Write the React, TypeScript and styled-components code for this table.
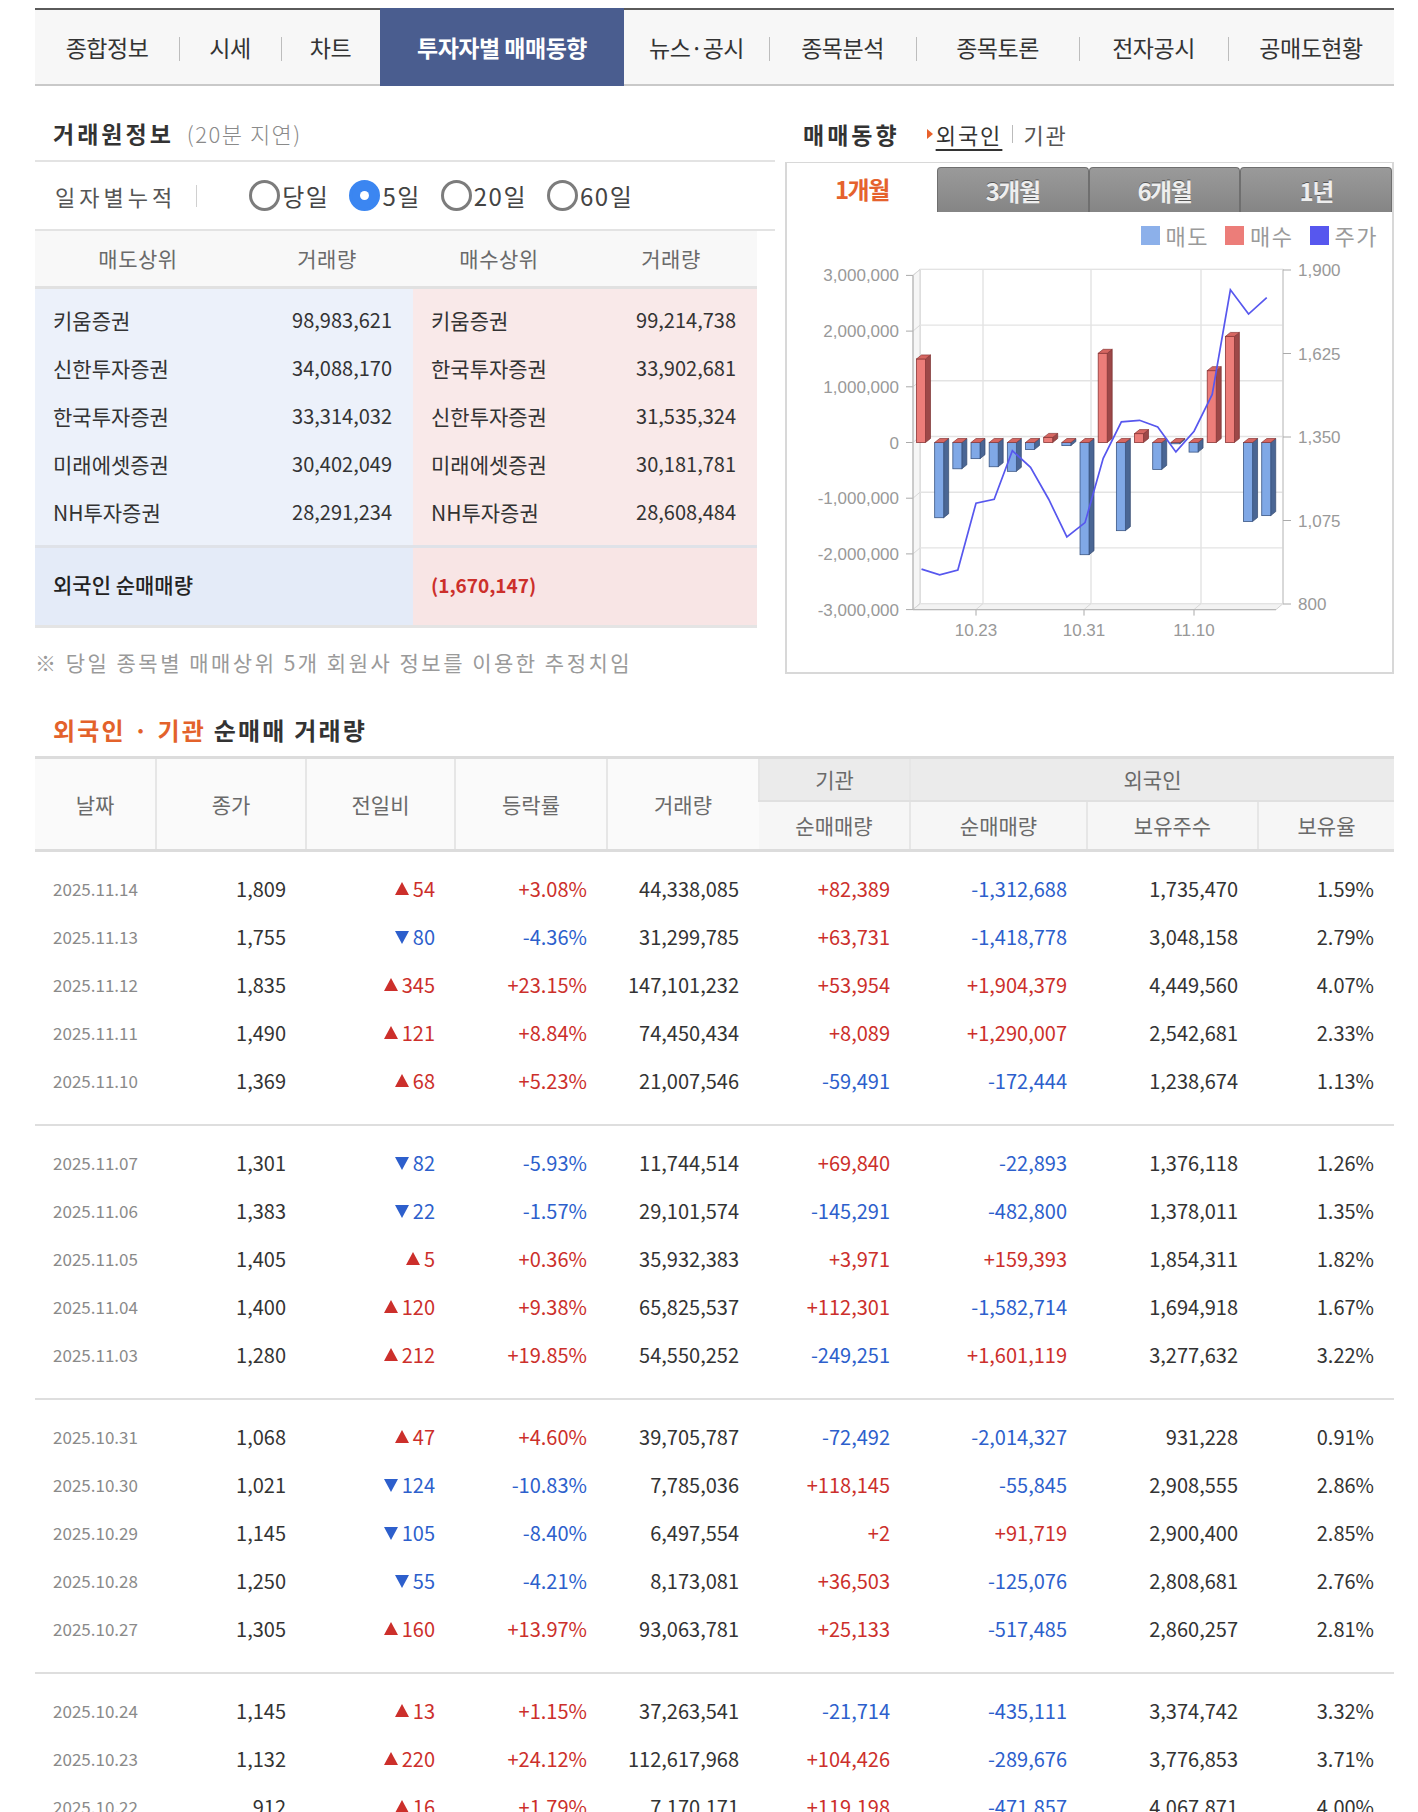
import React from 'react'
import styled, { createGlobalStyle, css } from 'styled-components'

const GlobalStyle = createGlobalStyle`
	* { box-sizing: border-box; }
	body {
		margin: 0;
		background: #fff;
		color: #333;
		font-family: 'Noto Sans CJK KR', 'Noto Sans', sans-serif;
	}
`

const RED = '#cc2f2b'
const BLUE = '#2d5fcc'

const navTabs = [
	{ label: '종합정보', w: 144 },
	{ label: '시세', w: 102 },
	{ label: '차트', w: 99 },
	{ label: '투자자별 매매동향', w: 244, active: true },
	{ label: '뉴스·공시', w: 145 },
	{ label: '종목분석', w: 147 },
	{ label: '종목토론', w: 163 },
	{ label: '전자공시', w: 149 },
	{ label: '공매도현황', w: 166 },
]

const brokers = [
	['키움증권', '98,983,621', '키움증권', '99,214,738'],
	['신한투자증권', '34,088,170', '한국투자증권', '33,902,681'],
	['한국투자증권', '33,314,032', '신한투자증권', '31,535,324'],
	['미래에셋증권', '30,402,049', '미래에셋증권', '30,181,781'],
	['NH투자증권', '28,291,234', 'NH투자증권', '28,608,484'],
]

type Row = [string, string, number, string, string, string, string, string, string]

// date, close, change (signed), rate, volume, inst, foreign, holding, ratio
const rows: Row[] = [
	['2025.11.14', '1,809', 54, '+3.08%', '44,338,085', '+82,389', '-1,312,688', '1,735,470', '1.59%'],
	['2025.11.13', '1,755', -80, '-4.36%', '31,299,785', '+63,731', '-1,418,778', '3,048,158', '2.79%'],
	['2025.11.12', '1,835', 345, '+23.15%', '147,101,232', '+53,954', '+1,904,379', '4,449,560', '4.07%'],
	['2025.11.11', '1,490', 121, '+8.84%', '74,450,434', '+8,089', '+1,290,007', '2,542,681', '2.33%'],
	['2025.11.10', '1,369', 68, '+5.23%', '21,007,546', '-59,491', '-172,444', '1,238,674', '1.13%'],
	['2025.11.07', '1,301', -82, '-5.93%', '11,744,514', '+69,840', '-22,893', '1,376,118', '1.26%'],
	['2025.11.06', '1,383', -22, '-1.57%', '29,101,574', '-145,291', '-482,800', '1,378,011', '1.35%'],
	['2025.11.05', '1,405', 5, '+0.36%', '35,932,383', '+3,971', '+159,393', '1,854,311', '1.82%'],
	['2025.11.04', '1,400', 120, '+9.38%', '65,825,537', '+112,301', '-1,582,714', '1,694,918', '1.67%'],
	['2025.11.03', '1,280', 212, '+19.85%', '54,550,252', '-249,251', '+1,601,119', '3,277,632', '3.22%'],
	['2025.10.31', '1,068', 47, '+4.60%', '39,705,787', '-72,492', '-2,014,327', '931,228', '0.91%'],
	['2025.10.30', '1,021', -124, '-10.83%', '7,785,036', '+118,145', '-55,845', '2,908,555', '2.86%'],
	['2025.10.29', '1,145', -105, '-8.40%', '6,497,554', '+2', '+91,719', '2,900,400', '2.85%'],
	['2025.10.28', '1,250', -55, '-4.21%', '8,173,081', '+36,503', '-125,076', '2,808,681', '2.76%'],
	['2025.10.27', '1,305', 160, '+13.97%', '93,063,781', '+25,133', '-517,485', '2,860,257', '2.81%'],
	['2025.10.24', '1,145', 13, '+1.15%', '37,263,541', '-21,714', '-435,111', '3,374,742', '3.32%'],
	['2025.10.23', '1,132', 220, '+24.12%', '112,617,968', '+104,426', '-289,676', '3,776,853', '3.71%'],
	['2025.10.22', '912', 16, '+1.79%', '7,170,171', '+119,198', '-471,857', '4,067,871', '4.00%'],
	['2025.10.21', '896', -19, '-2.08%', '9,412,305', '-38,120', '-1,350,214', '4,539,728', '4.47%'],
	['2025.10.20', '915', 12, '+1.33%', '8,806,442', '+15,907', '+1,498,330', '5,889,942', '5.80%'],
]

const colWidths = [121, 150, 149, 152, 152, 151, 177, 171, 136]

// chart data (chronological)
const prices = [915, 896, 912, 1132, 1145, 1305, 1250, 1145, 1021, 1068, 1280, 1400, 1405, 1383, 1301, 1369, 1490, 1835, 1755, 1809]
const nets = [
	1500000, -1350214, -471857, -289676, -435111, -517485, -125076, 91719, -55845, -2014327, 1601119, -1582714, 159393,
	-482800, -22893, -172444, 1290007, 1904379, -1418778, -1312688,
]

const tone = (s: string) => (s.startsWith('+') ? RED : s.startsWith('-') ? BLUE : '#333')

const yv = (v: number) => 184.5 - (v / 1e6) * 55.7
const yp = (p: number) => 346 - ((p - 800) / 1100) * 334
const bx = (i: number) => 134.5 + i * 18.17
const WX = 7
const WY = 6

const TradeChart = () => {
	const levels = [3, 2, 1, 0, -1, -2, -3].map(m => m * 1e6)
	const priceTicks = [1900, 1625, 1350, 1075, 800]
	const xLabels = [
		{ t: '10.23', x: 189 },
		{ t: '10.31', x: 297 },
		{ t: '11.10', x: 407 },
	]
	const top = yv(3e6)
	const bottom = yv(-3e6)
	const y0 = yv(0)
	const linePts = prices.map((p, i) => `${bx(i)},${yp(p)}`).join(' ')

	return (
		<ChartSvg width={605} height={414} viewBox="0 0 605 414">
			{/* walls */}
			<rect x={126 + WX} y={top - WY} width={496 - 126 - WX} height={bottom - top} fill="#fff" stroke="#d4d4d4" />
			<polygon
				points={`126,${top} ${126 + WX},${top - WY} ${126 + WX},${bottom - WY} 126,${bottom}`}
				fill="#f6f6f6"
				stroke="#d4d4d4"
			/>
			<polygon
				points={`126,${bottom} ${126 + WX},${bottom - WY} 496,${bottom - WY} ${496 - WX},${bottom}`}
				fill="#f3f3f3"
				stroke="#d4d4d4"
			/>
			{levels.map(v => (
				<g key={v}>
					<line x1={126 + WX} x2={496} y1={yv(v) - WY} y2={yv(v) - WY} stroke="#e3e3e3" strokeWidth={1.4} />
					<line x1={126} x2={126 + WX} y1={yv(v)} y2={yv(v) - WY} stroke="#d8d8d8" />
					<line x1={119} x2={126} y1={yv(v)} y2={yv(v)} stroke="#aaa" />
					<AxisText x={112} y={yv(v) + 6} textAnchor="end">
						{v.toLocaleString('en-US')}
					</AxisText>
				</g>
			))}
			{xLabels.map(l => (
				<g key={l.t}>
					<line x1={l.x + WX} x2={l.x + WX} y1={top - WY} y2={bottom - WY} stroke="#e3e3e3" strokeWidth={1.4} />
					<line x1={l.x} x2={l.x + WX} y1={bottom} y2={bottom - WY} stroke="#d8d8d8" />
					<line x1={l.x} x2={l.x} y1={bottom} y2={bottom + 6} stroke="#aaa" />
					<AxisText x={l.x} y={378} textAnchor="middle">
						{l.t}
					</AxisText>
				</g>
			))}
			<line x1={126} x2={126} y1={top} y2={bottom} stroke="#b8b8b8" strokeWidth={1.2} />
			<line x1={126} x2={496 - WX} y1={bottom} y2={bottom} stroke="#b8b8b8" strokeWidth={1.2} />
			<line x1={496} x2={496} y1={top - WY} y2={bottom - WY} stroke="#c8c8c8" />
			{priceTicks.map(p => (
				<g key={p}>
					<line x1={496} x2={504} y1={yp(p)} y2={yp(p)} stroke="#aaa" />
					<AxisText x={511} y={yp(p) + 6}>
						{p.toLocaleString('en-US')}
					</AxisText>
				</g>
			))}

			{/* bars */}
			{nets.map((v, i) => {
				const x = bx(i) - 5
				const w = 9
				const d = 5
				const yt = yv(v)
				const pos = v > 0
				const y1 = pos ? yt : y0
				const y2 = pos ? y0 : yt
				return (
					<g key={i}>
						<polygon
							points={`${x + w},${y1} ${x + w + d},${y1 - 4} ${x + w + d},${y2 - 4} ${x + w},${y2}`}
							fill={pos ? '#9c4848' : '#4a6694'}
							stroke={pos ? '#7a3030' : '#33496e'}
							strokeWidth={0.7}
						/>
						<rect
							x={x}
							y={y1}
							width={w}
							height={Math.max(y2 - y1, 0.5)}
							fill={pos ? '#ec7d79' : '#80a8e6'}
							stroke={pos ? '#8a3636' : '#3a5684'}
							strokeWidth={0.8}
						/>
						<polygon
							points={`${x},${y1} ${x + d},${y1 - 4} ${x + w + d},${y1 - 4} ${x + w},${y1}`}
							fill="#d66661"
							stroke="#8a3636"
							strokeWidth={0.7}
						/>
					</g>
				)
			})}

			<polyline points={linePts} fill="none" stroke="#5757ee" strokeWidth={1.7} />
		</ChartSvg>
	)
}

const App = () => {
	return (
		<Page>
			<GlobalStyle />
			<Nav>
				{navTabs.map((t, i) => {
					const prev = navTabs[i - 1]
					const sep = i > 0 && !t.active && !(prev && prev.active)
					return (
						<NavTab key={t.label} $w={t.w} $active={!!t.active} $sep={sep}>
							{t.label}
						</NavTab>
					)
				})}
			</Nav>

			<Middle>
				<LeftPanel>
					<TitleRow $line>
						<Title>거래원정보</Title>
						<TitleNote>(20분 지연)</TitleNote>
					</TitleRow>
					<FilterRow>
						<FilterLabel>일자별누적</FilterLabel>
						<Divider />
						<RadioGroup>
							{['당일', '5일', '20일', '60일'].map(l => (
								<RadioItem key={l}>
									<Radio $on={l === '5일'} />
									<span>{l}</span>
								</RadioItem>
							))}
						</RadioGroup>
					</FilterRow>
					<BrokerTable>
						<colgroup>
							<Col $w={206} />
							<Col $w={172} />
							<Col $w={172} />
							<Col $w={172} />
						</colgroup>
						<thead>
							<tr>
								<BrokerTh>매도상위</BrokerTh>
								<BrokerTh>거래량</BrokerTh>
								<BrokerTh>매수상위</BrokerTh>
								<BrokerTh>거래량</BrokerTh>
							</tr>
						</thead>
						<BrokerBody>
							{brokers.map(b => (
								<tr key={b[0] + b[2]}>
									<BrokerTd $side="sell">{b[0]}</BrokerTd>
									<BrokerTd $side="sell" $num>
										{b[1]}
									</BrokerTd>
									<BrokerTd $side="buy">{b[2]}</BrokerTd>
									<BrokerTd $side="buy" $num>
										{b[3]}
									</BrokerTd>
								</tr>
							))}
						</BrokerBody>
						<tfoot>
							<tr>
								<TotalTd $side="sell" colSpan={2}>
									외국인 순매매량
								</TotalTd>
								<TotalTd $side="buy" colSpan={2}>
									<NetValue>(1,670,147)</NetValue>
								</TotalTd>
							</tr>
						</tfoot>
					</BrokerTable>
					<Footnote>※ 당일 종목별 매매상위 5개 회원사 정보를 이용한 추정치임</Footnote>
				</LeftPanel>

				<RightPanel>
					<TitleRow>
						<Title>매매동향</Title>
						<SubLinks>
							<Pointer />
							<SubLink $current>외국인</SubLink>
							<SubSep />
							<SubLink>기관</SubLink>
						</SubLinks>
					</TitleRow>
					<ChartBox>
						<PeriodTabs>
							{['1개월', '3개월', '6개월', '1년'].map((p, i) => (
								<PeriodTab key={p} $active={i === 0}>
									{p}
								</PeriodTab>
							))}
						</PeriodTabs>
						<Legend>
							<LegendItem $color="#8cb0ea">매도</LegendItem>
							<LegendItem $color="#ec7d79">매수</LegendItem>
							<LegendItem $color="#5757ee">주가</LegendItem>
						</Legend>
						<TradeChart />
					</ChartBox>
				</RightPanel>
			</Middle>

			<SectionTitle>
				<Accent>외국인 · 기관</Accent> 순매매 거래량
			</SectionTitle>
			<DailyTable>
				<colgroup>
					{colWidths.map((w, i) => (
						<Col key={i} $w={w} />
					))}
				</colgroup>
				<thead>
					<tr>
						<HeadTh rowSpan={2}>날짜</HeadTh>
						<HeadTh rowSpan={2}>종가</HeadTh>
						<HeadTh rowSpan={2}>전일비</HeadTh>
						<HeadTh rowSpan={2}>등락률</HeadTh>
						<HeadTh rowSpan={2}>거래량</HeadTh>
						<HeadTh $tone="group">기관</HeadTh>
						<HeadTh $tone="group" colSpan={3}>
							외국인
						</HeadTh>
					</tr>
					<tr>
						<HeadTh $tone="sub">순매매량</HeadTh>
						<HeadTh $tone="sub">순매매량</HeadTh>
						<HeadTh $tone="sub">보유주수</HeadTh>
						<HeadTh $tone="sub">보유율</HeadTh>
					</tr>
				</thead>
				{[0, 1, 2, 3].map(g => (
					<DailyBody key={g}>
						{rows.slice(g * 5, g * 5 + 5).map(r => (
							<tr key={r[0]}>
								<DateTd>{r[0]}</DateTd>
								<NumTd>{r[1]}</NumTd>
								<NumTd $color={r[2] > 0 ? RED : BLUE}>
									<Arrow $up={r[2] > 0} />
									{Math.abs(r[2])}
								</NumTd>
								<NumTd $color={tone(r[3])}>{r[3]}</NumTd>
								<NumTd>{r[4]}</NumTd>
								<NumTd $color={tone(r[5])}>{r[5]}</NumTd>
								<NumTd $color={tone(r[6])}>{r[6]}</NumTd>
								<NumTd>{r[7]}</NumTd>
								<NumTd>{r[8]}</NumTd>
							</tr>
						))}
					</DailyBody>
				))}
			</DailyTable>
		</Page>
	)
}

export default App

const Page = styled.div`
	width: 1394px;
	padding: 8px 0 40px 35px;
`

const Nav = styled.nav`
	display: flex;
	height: 78px;
	background: #f7f7f7;
	border-top: 2px solid #5a5a5a;
	border-bottom: 2px solid #c9c9c9;
`

const NavTab = styled.div<{ $w: number; $active: boolean; $sep: boolean }>`
	position: relative;
	flex: 0 0 ${p => p.$w}px;
	display: flex;
	align-items: center;
	justify-content: center;
	font-size: 23px;
	letter-spacing: -0.5px;
	color: #333;

	${p =>
		p.$active &&
		css`
			margin: -2px 0 -2px;
			background: #4a5d8f;
			color: #fff;
			font-weight: 700;
		`}

	${p =>
		p.$sep &&
		css`
			&::before {
				content: '';
				position: absolute;
				left: 0;
				top: 27px;
				width: 1px;
				height: 24px;
				background: #bdbdbd;
			}
		`}
`

const Middle = styled.div`
	display: flex;
	gap: 10px;
	align-items: flex-start;
`

const LeftPanel = styled.section`
	width: 740px;
`

const RightPanel = styled.section`
	width: 609px;
`

const TitleRow = styled.div<{ $line?: boolean }>`
	display: flex;
	align-items: center;
	height: 76px;
	padding: 20px 0 0 18px;
	${p => p.$line && 'border-bottom: 2px solid #e3e3e3;'}
`

const Title = styled.h2`
	margin: 0;
	font-size: 23px;
	font-weight: 700;
	letter-spacing: 3px;
	color: #333;
`

const TitleNote = styled.span`
	margin-left: 13px;
	font-size: 22px;
	letter-spacing: 1.5px;
	color: #8a8a8a;
	font-weight: 300;
`

const FilterRow = styled.div`
	display: flex;
	align-items: center;
	height: 69px;
	padding-left: 20px;
	border-bottom: 2px solid #e3e3e3;
`

const FilterLabel = styled.span`
	font-size: 22px;
	letter-spacing: 4px;
	color: #555;
`

const Divider = styled.span`
	width: 1px;
	height: 22px;
	margin: 0 52px 0 20px;
	background: #d0d0d0;
`

const RadioGroup = styled.div`
	display: flex;
	align-items: center;
	gap: 20px;
`

const RadioItem = styled.label`
	display: flex;
	align-items: center;
	gap: 2px;
	font-size: 24px;
	letter-spacing: 1.5px;
	color: #444;
`

const Radio = styled.span<{ $on: boolean }>`
	width: 31px;
	height: 31px;
	border-radius: 50%;
	border: 3px solid #7c7c7c;
	background: #fff;
	display: flex;
	align-items: center;
	justify-content: center;

	${p =>
		p.$on &&
		css`
			border-color: #3b86f1;
			background: #3b86f1;
			&::after {
				content: '';
				width: 9px;
				height: 9px;
				border-radius: 50%;
				background: #fff;
			}
		`}
`

const Col = styled.col<{ $w: number }>`
	width: ${p => p.$w}px;
`

const BrokerTable = styled.table`
	width: 722px;
	table-layout: fixed;
	border-collapse: collapse;
`

const BrokerTh = styled.th`
	height: 56px;
	padding: 0;
	background: #f8f8f8;
	border-bottom: 3px solid #e1e1e1;
	font-size: 21px;
	letter-spacing: 0.5px;
	font-weight: 400;
	color: #6a6a6a;
`

const sideBg = {
	sell: '#ecf1fa',
	buy: '#f9e9e9',
}

const BrokerBody = styled.tbody`
	tr:first-child td {
		padding-top: 7px;
	}
	tr:last-child td {
		padding-bottom: 9px;
	}
`

const BrokerTd = styled.td<{ $side: 'sell' | 'buy'; $num?: boolean }>`
	line-height: 48px;
	padding: 0 ${p => (p.$num ? '21px' : '0')} 0 ${p => (p.$num ? '0' : '18px')};
	text-align: ${p => (p.$num ? 'right' : 'left')};
	background: ${p => sideBg[p.$side]};
	font-size: ${p => (p.$num ? '20px' : '21px')};
	color: #333;
	white-space: nowrap;
`

const TotalTd = styled.td<{ $side: 'sell' | 'buy' }>`
	height: 80px;
	padding: 0 0 4px 18px;
	background: ${p => (p.$side === 'sell' ? '#e4ebf8' : '#f8e5e5')};
	border-top: 3px solid #dfe2e8;
	border-bottom: 3px solid #e4e4e4;
	font-size: 21px;
	font-weight: 500;
	color: #222;
`

const NetValue = styled.span`
	font-size: 19px;
	color: ${RED};
	font-weight: 700;
`

const Footnote = styled.p`
	margin: 19px 0 0;
	line-height: 30px;
	font-size: 21px;
	letter-spacing: 2.5px;
	color: #9a9a9a;
`

const SubLinks = styled.div`
	display: flex;
	align-items: center;
	margin-left: 27px;
	font-size: 22px;
`

const Pointer = styled.span`
	width: 0;
	height: 0;
	margin-right: 3px;
	border-top: 5px solid transparent;
	border-bottom: 5px solid transparent;
	border-left: 6px solid #e8612c;
`

const SubLink = styled.span<{ $current?: boolean }>`
	letter-spacing: 2px;
	color: ${p => (p.$current ? '#333' : '#555')};
	text-decoration: ${p => (p.$current ? 'underline' : 'none')};
	text-underline-offset: 5px;
`

const SubSep = styled.span`
	width: 1px;
	height: 18px;
	margin: 0 10px;
	background: #bbb;
`

const ChartBox = styled.div`
	height: 512px;
	border: 2px solid #d8d8d8;
	border-top-width: 1px;
	background: #fff;
`

const PeriodTabs = styled.div`
	display: flex;
	align-items: flex-end;
	height: 49px;
`

const PeriodTab = styled.div<{ $active: boolean }>`
	flex: 1;
	display: flex;
	align-items: center;
	justify-content: center;
	font-size: 24px;
	font-weight: 700;
	letter-spacing: -1.5px;

	${p =>
		p.$active
			? css`
					height: 49px;
					padding-top: 2px;
					background: #fff;
					color: #e5622d;
			  `
			: css`
					height: 45px;
					border: 1px solid #6f6f6f;
					border-bottom: none;
					border-radius: 4px 4px 0 0;
					background: linear-gradient(#9a9a9a, #858585);
					color: #eeeeee;
					text-shadow: 0 -1px 0 #555;
			  `}
`

const Legend = styled.div`
	display: flex;
	justify-content: flex-end;
	align-items: center;
	gap: 16px;
	height: 46px;
	padding-right: 14px;
`

const LegendItem = styled.span<{ $color: string }>`
	display: flex;
	align-items: center;
	gap: 6px;
	font-size: 22px;
	letter-spacing: 1.5px;
	color: #9a9a9a;

	&::before {
		content: '';
		width: 19px;
		height: 19px;
		background: ${p => p.$color};
	}
`

const ChartSvg = styled.svg`
	display: block;
`

const AxisText = styled.text`
	font-family: 'Liberation Sans', Arial, sans-serif;
	font-size: 17px;
	fill: #999;
`

const SectionTitle = styled.h3`
	margin: 33px 0 6px;
	height: 40px;
	line-height: 40px;
	padding-left: 18px;
	font-size: 24px;
	font-weight: 700;
	letter-spacing: 2.2px;
	color: #333;
`

const Accent = styled.span`
	color: #e3622b;
`

const DailyTable = styled.table`
	width: 1359px;
	table-layout: fixed;
	border-collapse: collapse;
	border-top: 3px solid #dcdcdc;
`

const headBg = {
	plain: '#fafafa',
	group: '#ebebeb',
	sub: '#f6f6f6',
}

const HeadTh = styled.th<{ $tone?: 'plain' | 'group' | 'sub' }>`
	height: ${p => (p.$tone === 'sub' ? '49px' : '44px')};
	padding: 0;
	background: ${p => headBg[p.$tone || 'plain']};
	border-left: 2px solid #e6e6e6;
	border-bottom: ${p => (p.$tone === 'group' ? '2px solid #e0e0e0' : '3px solid #dcdcdc')};
	font-size: 21px;
	font-weight: 400;
	color: #6a6a6a;

	&:first-child {
		border-left: none;
	}
`

const DailyBody = styled.tbody`
	border-bottom: 2px solid #dedede;

	tr:first-child td {
		padding-top: 13px;
	}
	tr:last-child td {
		padding-bottom: 19px;
	}
`

const DateTd = styled.td`
	line-height: 48px;
	padding: 0;
	text-align: center;
	font-size: 17px;
	color: #8a8a8a;
`

const NumTd = styled.td<{ $color?: string }>`
	line-height: 48px;
	padding: 0 20px 0 0;
	text-align: right;
	font-size: 20px;
	color: ${p => p.$color || '#333'};
	white-space: nowrap;
`

const Arrow = styled.span<{ $up: boolean }>`
	display: inline-block;
	width: 0;
	height: 0;
	margin-right: 4px;
	border-left: 7px solid transparent;
	border-right: 7px solid transparent;
	vertical-align: ${p => (p.$up ? '2px' : '1px')};
	${p => (p.$up ? `border-bottom: 13px solid ${RED};` : `border-top: 13px solid ${BLUE};`)}
`
